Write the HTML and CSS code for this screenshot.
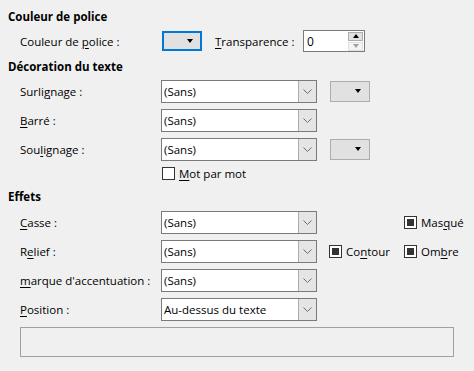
FILE: index.html
```html
<!DOCTYPE html>
<html lang="fr">

<head>
  <meta charset="UTF-8">
  <title>Effets de caractères</title>
  <link rel="stylesheet" href="styles.css">
</head>

<body>
  <div class="dialog">
    <h2 class="section first">Couleur de police</h2>
    <div class="row row-color">
      <span class="label">Couleur de <u>p</u>olice :</span>
      <button class="color-btn focused"><span class="tri"></span></button>
      <span class="label-inline"><u>T</u>ransparence :</span>
      <div class="spin">
        <span class="spin-value">0</span>
        <div class="spin-btns">
          <span class="spin-up"><span class="tri-up"></span></span>
          <span class="spin-down"><span class="tri-down"></span></span>
        </div>
      </div>
    </div>

    <h2 class="section">Décoration du texte</h2>
    <div class="row">
      <span class="label">Surli<u>g</u>nage :</span>
      <div class="combo"><span class="combo-text">(Sans)</span><span class="combo-btn"><svg width="9" height="5" viewBox="0 0 9 5"><path d="M0.5 0.5 L4.5 4.5 L8.5 0.5" fill="none" stroke="#6d6d6d"/></svg></span></div>
      <button class="color-btn small"><span class="tri"></span></button>
    </div>
    <div class="row">
      <span class="label"><u>B</u>arré :</span>
      <div class="combo"><span class="combo-text">(Sans)</span><span class="combo-btn"><svg width="9" height="5" viewBox="0 0 9 5"><path d="M0.5 0.5 L4.5 4.5 L8.5 0.5" fill="none" stroke="#6d6d6d"/></svg></span></div>
    </div>
    <div class="row">
      <span class="label">Sou<u>l</u>ignage :</span>
      <div class="combo"><span class="combo-text">(Sans)</span><span class="combo-btn"><svg width="9" height="5" viewBox="0 0 9 5"><path d="M0.5 0.5 L4.5 4.5 L8.5 0.5" fill="none" stroke="#6d6d6d"/></svg></span></div>
      <button class="color-btn small"><span class="tri"></span></button>
    </div>
    <div class="row row-check">
      <span class="label"></span>
      <label class="check"><span class="box"></span><u>M</u>ot par mot</label>
    </div>

    <h2 class="section effects">Effets</h2>
    <div class="effects-grid">
      <div class="row">
        <span class="label"><u>C</u>asse :</span>
        <div class="combo"><span class="combo-text">(Sans)</span><span class="combo-btn"><svg width="9" height="5" viewBox="0 0 9 5"><path d="M0.5 0.5 L4.5 4.5 L8.5 0.5" fill="none" stroke="#6d6d6d"/></svg></span></div>
        <span class="check-slot"></span>
        <label class="check"><span class="box mixed"></span>Mas<u>q</u>ué</label>
      </div>
      <div class="row">
        <span class="label">R<u>e</u>lief :</span>
        <div class="combo"><span class="combo-text">(Sans)</span><span class="combo-btn"><svg width="9" height="5" viewBox="0 0 9 5"><path d="M0.5 0.5 L4.5 4.5 L8.5 0.5" fill="none" stroke="#6d6d6d"/></svg></span></div>
        <label class="check check-slot"><span class="box mixed"></span>Co<u>n</u>tour</label>
        <label class="check"><span class="box mixed"></span>Om<u>b</u>re</label>
      </div>
      <div class="row">
        <span class="label"><u>m</u>arque d'accentuation :</span>
        <div class="combo"><span class="combo-text">(Sans)</span><span class="combo-btn"><svg width="9" height="5" viewBox="0 0 9 5"><path d="M0.5 0.5 L4.5 4.5 L8.5 0.5" fill="none" stroke="#6d6d6d"/></svg></span></div>
      </div>
      <div class="row">
        <span class="label"><u>P</u>osition :</span>
        <div class="combo"><span class="combo-text">Au-dessus du texte</span><span class="combo-btn"><svg width="9" height="5" viewBox="0 0 9 5"><path d="M0.5 0.5 L4.5 4.5 L8.5 0.5" fill="none" stroke="#6d6d6d"/></svg></span></div>
      </div>
    </div>

    <div class="preview"></div>
  </div>
</body>

</html>
```

FILE: styles.css
```css
body {
  margin: 0;
  background-color: #f0f0f0;
  font-family: "Open Sans", "Noto Sans", sans-serif;
  font-size: 11.5px;
  color: #000;
}

.dialog {
  padding: 0 8px;
}

u {
  text-decoration-thickness: 1px;
  text-underline-offset: 2px;
}

.section {
  font-size: 11.5px;
  font-weight: bold;
  margin: 0;
  height: 16px;
  line-height: 16px;
  margin-top: 7px;
  margin-bottom: 5px;
}

.section.first {
  margin-top: 9px;
}

.section.effects {
  margin-top: 9px;
  margin-bottom: 6px;
}

.row {
  display: flex;
  align-items: center;
  height: 23px;
  margin-bottom: 6px;
}

.row-color {
  height: 22px;
  margin-bottom: 0;
}

.row-check {
  height: 13px;
  margin-bottom: 0;
}

.label {
  width: 141px;
  padding-left: 12px;
  flex-shrink: 0;
  white-space: nowrap;
}

.label-inline {
  margin-left: 13px;
  width: 88px;
  white-space: nowrap;
}

.color-btn {
  box-sizing: border-box;
  width: 40px;
  height: 21px;
  margin: 0;
  margin-left: 1px;
  padding: 0;
  background-color: #e1e1e1;
  border: 1px solid #adadad;
  position: relative;
}

.color-btn.focused {
  height: 20px;
  border: 2px solid #0078d7;
}

.color-btn.small {
  margin-left: 13px;
}

.tri {
  position: absolute;
  right: 8px;
  top: 7px;
  width: 0;
  height: 0;
  border-left: 3.5px solid transparent;
  border-right: 3.5px solid transparent;
  border-top: 4px solid #000;
}

.color-btn.focused .tri {
  right: 7px;
  top: 6px;
}

.spin {
  box-sizing: border-box;
  width: 62px;
  height: 22px;
  border: 1px solid #7a7a7a;
  background-color: #fff;
  display: flex;
  align-items: center;
  justify-content: space-between;
}

.spin-value {
  padding-left: 3px;
  font-size: 12px;
}

.spin-btns {
  display: flex;
  flex-direction: column;
  gap: 1px;
  margin-right: 1px;
}

.spin-up,
.spin-down {
  box-sizing: border-box;
  width: 15px;
  height: 9px;
  display: flex;
  align-items: center;
  justify-content: center;
}

.spin-up {
  background-color: #e1e1e1;
  border: 1px solid #adadad;
}

.spin-down {
  background-color: #f4f4f4;
  border: 1px solid #e0e0e0;
}

.tri-up {
  width: 0;
  height: 0;
  border-left: 3.5px solid transparent;
  border-right: 3.5px solid transparent;
  border-bottom: 4px solid #000;
}

.tri-down {
  width: 0;
  height: 0;
  border-left: 3.5px solid transparent;
  border-right: 3.5px solid transparent;
  border-top: 4px solid #a0a0a0;
}

.combo {
  box-sizing: border-box;
  width: 156px;
  height: 23px;
  border: 1px solid #7a7a7a;
  background-color: #fff;
  display: flex;
  align-items: stretch;
  flex-shrink: 0;
}

.combo-text {
  flex: 1;
  padding-left: 2px;
  line-height: 21px;
  white-space: nowrap;
}

.combo-btn {
  width: 17px;
  background-color: #e5e5e5;
  border-left: 1px solid #adadad;
  display: flex;
  align-items: center;
  justify-content: center;
}

.effects-grid .row {
  height: 22px;
  margin-bottom: 7px;
}

.check-slot {
  width: 75px;
  margin-left: 12px;
}

.check {
  display: flex;
  align-items: center;
  white-space: nowrap;
}

.box {
  box-sizing: border-box;
  width: 13px;
  height: 13px;
  border: 1px solid #333;
  background-color: #fff;
  margin-right: 4px;
  position: relative;
}

.row-check .check {
  margin-left: 1px;
}

.box.mixed::after {
  content: "";
  position: absolute;
  left: 2px;
  top: 2px;
  width: 7px;
  height: 7px;
  background-color: #333;
}

.preview {
  box-sizing: border-box;
  height: 30px;
  margin: 6px 12px 0;
  border: 1px solid #a0a0a0;
}
```
